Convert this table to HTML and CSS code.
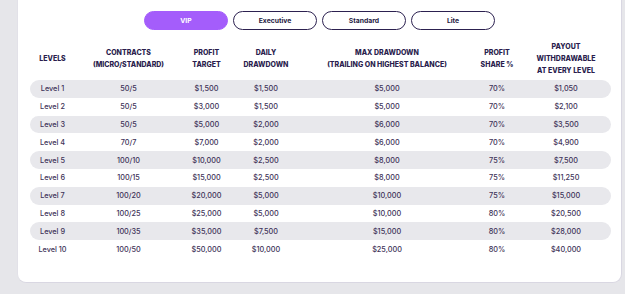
FILE: index.html
```html
<!DOCTYPE html>
<html>
<head>
<meta charset="utf-8">
<link rel="stylesheet" href="styles.css">
</head>
<body>
<div class="card">
  <div class="tabs">
    <button class="tab active">VIP</button>
    <button class="tab">Executive</button>
    <button class="tab">Standard</button>
    <button class="tab">Lite</button>
  </div>
  <div class="table">
    <div class="row head">
      <div>LEVELS</div>
      <div>CONTRACTS<br>(MICRO/STANDARD)</div>
      <div>PROFIT<br>TARGET</div>
      <div>DAILY<br>DRAWDOWN</div>
      <div>MAX DRAWDOWN<br>(TRAILING ON HIGHEST BALANCE)</div>
      <div>PROFIT<br>SHARE %</div>
      <div>PAYOUT<br>WITHDRAWABLE<br>AT EVERY LEVEL</div>
    </div>
    <div class="row band"><div>Level 1</div><div>50/5</div><div>$1,500</div><div>$1,500</div><div>$5,000</div><div>70%</div><div>$1,050</div></div>
    <div class="row"><div>Level 2</div><div>50/5</div><div>$3,000</div><div>$1,500</div><div>$5,000</div><div>70%</div><div>$2,100</div></div>
    <div class="row band"><div>Level 3</div><div>50/5</div><div>$5,000</div><div>$2,000</div><div>$6,000</div><div>70%</div><div>$3,500</div></div>
    <div class="row"><div>Level 4</div><div>70/7</div><div>$7,000</div><div>$2,000</div><div>$6,000</div><div>70%</div><div>$4,900</div></div>
    <div class="row band"><div>Level 5</div><div>100/10</div><div>$10,000</div><div>$2,500</div><div>$8,000</div><div>75%</div><div>$7,500</div></div>
    <div class="row"><div>Level 6</div><div>100/15</div><div>$15,000</div><div>$2,500</div><div>$8,000</div><div>75%</div><div>$11,250</div></div>
    <div class="row band"><div>Level 7</div><div>100/20</div><div>$20,000</div><div>$5,000</div><div>$10,000</div><div>75%</div><div>$15,000</div></div>
    <div class="row"><div>Level 8</div><div>100/25</div><div>$25,000</div><div>$5,000</div><div>$10,000</div><div>80%</div><div>$20,500</div></div>
    <div class="row band"><div>Level 9</div><div>100/35</div><div>$35,000</div><div>$7,500</div><div>$15,000</div><div>80%</div><div>$28,000</div></div>
    <div class="row"><div>Level 10</div><div>100/50</div><div>$50,000</div><div>$10,000</div><div>$25,000</div><div>80%</div><div>$40,000</div></div>
  </div>
</div>
</body>
</html>
```

FILE: styles.css
```css
html, body {
  margin: 0;
  padding: 0;
}
body {
  background: #e6e6ea;
  width: 625px;
  height: 294px;
  overflow: hidden;
  font-family: "Inter", "Liberation Sans", sans-serif;
}
.card {
  margin-left: 17px;
  width: 605px;
  background: #ffffff;
  border-right: 1px solid #d9d7e2;
  border-bottom: 1px solid #d9d7e2;
  border-left: 1px solid #e2e1e8;
  border-radius: 0 0 9px 9px;
  padding: 11px 11px 24px 12px;
  box-sizing: border-box;
  height: 283px;
}
.tabs {
  display: flex;
  justify-content: center;
  gap: 5px;
  margin-left: -1px;
}
.tab {
  width: 84px;
  height: 19px;
  box-sizing: border-box;
  border: 1px solid #2c2150;
  border-radius: 10px;
  background: #ffffff;
  color: #24183f;
  font-family: inherit;
  font-weight: 700;
  font-size: 6.8px;
  padding: 0;
}
.tab.active {
  background: #a45dfb;
  border-color: #a45dfb;
  color: #ffffff;
}
.table {
  margin-top: 11px;
  width: 581px;
}
.row {
  display: grid;
  grid-template-columns: 45px 107px 49px 70px 172px 48px 90px;
  align-items: center;
  justify-items: center;
  height: 17.8px;
  font-size: 7.3px;
  font-weight: 500;
  color: #3e3358;
  border-radius: 9px;
}
.row.band {
  background: #e8e8ec;
}
.row.head {
  height: 36px;
  margin-bottom: 3px;
  font-size: 7px;
  font-weight: 800;
  color: #2a1d4d;
  line-height: 11.8px;
  text-align: center;
}
```
